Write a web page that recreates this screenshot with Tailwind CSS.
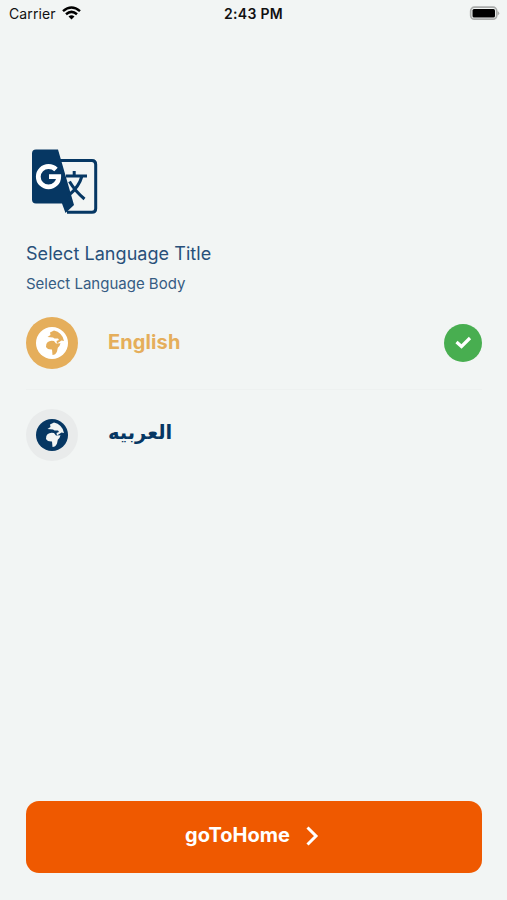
<!DOCTYPE html>
<html lang="en">
<head>
<meta charset="utf-8">
<title>Select Language</title>
<script src="https://cdn.jsdelivr.net/npm/@tailwindcss/browser@4"></script>
</head>
<body class="bg-[#f2f5f4]">
<svg class="hidden">
  <symbol id="land" viewBox="0 0 32 32">
    <path d="M11.500 10 L14.500 8 L14 5.500 L18 3.500 Q22 4 24.500 7 Q27.500 10 28 14 L25.500 13.500 L21 16.500 L20.500 14 L23 13 L22 11.500 L18.500 11.500 L17 10.500Z"/>
    <path d="M11.500 15.200 Q14 13 18 14 L20 16.500 L24.500 16.300 Q24 19 21.800 20.700 L21 24.500 Q19.500 28 16.500 28 L16 22.500 Q11.500 22.700 10 20 Q9.500 17 11.500 15.200Z"/>
  </symbol>
</svg>
<div class="flex h-[900px] w-[507px] flex-col overflow-hidden font-['Inter',sans-serif] text-[#063763]">
  <header class="grid h-7 grid-cols-3 items-center pl-[9px] pr-[7px] text-[#111]">
    <div class="flex items-center gap-[6px]">
      <span class="text-[14px] leading-7 tracking-[0.1px]">Carrier</span>
      <svg class="h-[14px] w-[19px] -translate-y-px" viewBox="0 0 19 14" fill="none" stroke="#000" stroke-width="2.5">
        <path d="M1 5.1Q9.5 -2.1 18 5.1M4 8.3Q9.500 3.500 15 8.300"/>
        <path d="M6.500 10.500Q9.500 7.900 12.500 10.500L9.500 13.500Z" fill="#000" stroke="none"/>
      </svg>
    </div>
    <div class="-ml-[2px] text-center text-[14px] leading-7 font-semibold tracking-[0.3px] whitespace-nowrap">2:43 PM</div>
    <svg class="h-4 w-[31px] justify-self-end" viewBox="0 0 31 16">
      <rect x="1.700" y="1.200" width="26" height="12" rx="3.700" fill="#f2f5f4" stroke="#a9abaa" stroke-width="1.700"/>
      <rect x="3.500" y="3" width="22.500" height="8.500" rx="1.500" fill="#000"/>
      <path d="M28.500 5Q32 7.200 28.500 9.500Z" fill="#a9abaa"/>
    </svg>
  </header>

  <main class="flex flex-1 flex-col pr-[25px] pl-[26px] pt-[121px] pb-[27px]">
    <svg class="ml-[5px] h-[67px] w-[67px]" viewBox="0 0 67 67">
      <path d="M29 11.500H61Q64.700 11.500 64.700 15.500V59.500Q64.700 63.300 61 63.300H36" fill="none" stroke="#063763" stroke-width="3"/>
      <path d="M5 .5H27L43 56L34.500 64L31 54.500H5Q1 54.500 1 50.500V4.500Q1 .5 5 .5Z" fill="#063763"/>
      <path d="M25 20.500Q22 17.500 17.500 17.500A10.200 10.200 0 1 0 27.700 27.700H18" fill="none" stroke="#fff" stroke-width="4.800"/>
      <path d="M35 27H56M43.200 22V27M51 27Q48 38 37.500 46.500M38.500 32.500Q44 42 53.500 50" fill="none" stroke="#063763" stroke-width="3"/>
    </svg>
    <h1 class="mt-[25px] h-[26px] text-[18px] leading-[26px] tracking-[0.05px] text-[#28507a] whitespace-nowrap">Select Language Title</h1>
    <p class="mt-[6px] h-[23px] text-[15px] leading-[22px] text-[#365c83] whitespace-nowrap">Select Language Body</p>

    <div class="mt-[21px] flex h-[52px] items-center">
      <div class="flex h-[52px] w-[52px] items-center justify-center rounded-full bg-[#e5ae5b]">
        <div class="h-8 w-8 rounded-full bg-white"><svg class="h-8 w-8 fill-[#e5ae5b]"><use href="#land"/></svg></div>
      </div>
      <span class="mb-[2px] ml-[30px] text-[20px] leading-7 font-bold tracking-[0.1px] text-[#e5ae5b]">English</span>
      <div class="ml-auto flex h-[38px] w-[38px] items-center justify-center rounded-full bg-[#48ae50]">
        <svg class="h-[14px] w-[17px] -translate-y-px" viewBox="0 0 17 14" fill="none" stroke="#fff" stroke-width="3.200"><path d="M1.500 7L6.500 11.500L15 3"/></svg>
      </div>
    </div>
    <div class="mt-5 h-px bg-[#eef1f0]"></div>
    <div class="mt-[19px] flex h-[52px] items-center">
      <div class="flex h-[52px] w-[52px] items-center justify-center rounded-full bg-[#e9ebeb]">
        <div class="h-8 w-8 rounded-full bg-[#063763]"><svg class="h-8 w-8 fill-[#f2f5f4]"><use href="#land"/></svg></div>
      </div>
      <span lang="ar" dir="rtl" class="mb-1 ml-[30px] font-['DejaVu_Sans',sans-serif] text-[19.500px] leading-7 font-bold">العربيه</span>
    </div>

    <button class="mt-auto flex h-[72px] w-full items-center justify-center gap-4 rounded-[13px] bg-[#ef5900] pr-[4px] text-white">
      <span class="mb-[4px] text-[20px] leading-7 font-bold">goToHome</span>
      <svg class="h-[20px] w-[13px] -translate-y-px" viewBox="0 0 13 20" fill="none" stroke="#fff" stroke-width="3"><path d="M1.500 1.500L10 10L1.500 18.500"/></svg>
    </button>
  </main>
</div>
</body>
</html>
